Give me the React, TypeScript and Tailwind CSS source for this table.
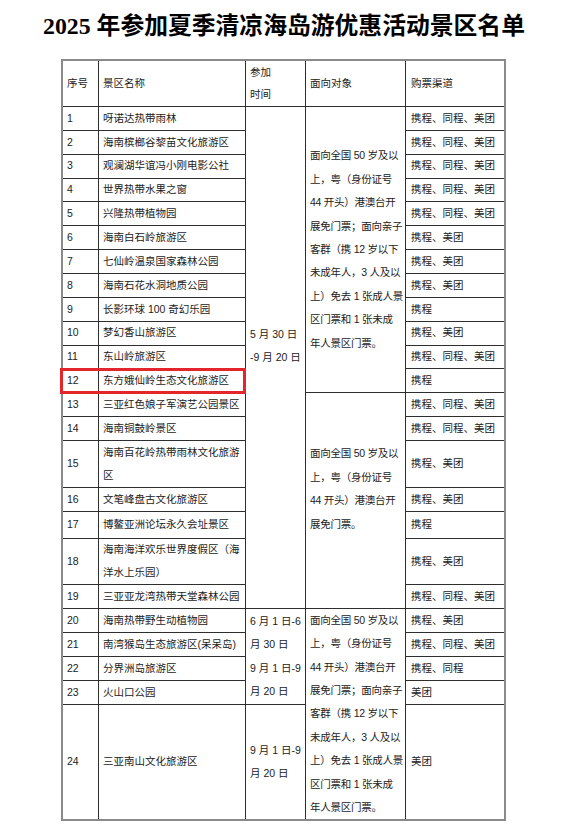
import React from "react";

type CellProps = { children?: React.ReactNode; className?: string };

function Cell({ children, className = "" }: CellProps) {
  return (
    <div
      className={
        "bg-white flex items-center pl-[4px] text-[10.5px] leading-[23.4px] text-[#222] whitespace-nowrap " +
        className
      }
    >
      <div>{children}</div>
    </div>
  );
}

function Lines({ lines }: { lines: string[] }) {
  return (
    <>
      {lines.map((l, i) => (
        <div key={i} className="h-[23.4px]">
          {l}
        </div>
      ))}
    </>
  );
}

const rows: { n: string; name: string[]; ch: string }[] = [
  { n: "1", name: ["呀诺达热带雨林"], ch: "携程、同程、美团" },
  { n: "2", name: ["海南槟榔谷黎苗文化旅游区"], ch: "携程、同程、美团" },
  { n: "3", name: ["观澜湖华谊冯小刚电影公社"], ch: "携程、同程、美团" },
  { n: "4", name: ["世界热带水果之窗"], ch: "携程、同程、美团" },
  { n: "5", name: ["兴隆热带植物园"], ch: "携程、同程、美团" },
  { n: "6", name: ["海南白石岭旅游区"], ch: "携程、美团" },
  { n: "7", name: ["七仙岭温泉国家森林公园"], ch: "携程、美团" },
  { n: "8", name: ["海南石花水洞地质公园"], ch: "携程、美团" },
  { n: "9", name: ["长影环球 100 奇幻乐园"], ch: "携程" },
  { n: "10", name: ["梦幻香山旅游区"], ch: "携程、美团" },
  { n: "11", name: ["东山岭旅游区"], ch: "携程、同程、美团" },
  { n: "12", name: ["东方娥仙岭生态文化旅游区"], ch: "携程" },
  { n: "13", name: ["三亚红色娘子军演艺公园景区"], ch: "携程、同程、美团" },
  { n: "14", name: ["海南铜鼓岭景区"], ch: "携程、同程、美团" },
  { n: "15", name: ["海南百花岭热带雨林文化旅游", "区"], ch: "携程、美团" },
  { n: "16", name: ["文笔峰盘古文化旅游区"], ch: "携程、美团" },
  { n: "17", name: ["博鳌亚洲论坛永久会址景区"], ch: "携程" },
  { n: "18", name: ["海南海洋欢乐世界度假区（海", "洋水上乐园）"], ch: "携程、美团" },
  { n: "19", name: ["三亚亚龙湾热带天堂森林公园"], ch: "携程、同程、美团" },
  { n: "20", name: ["海南热带野生动植物园"], ch: "携程、美团" },
  { n: "21", name: ["南湾猴岛生态旅游区(呆呆岛)"], ch: "携程、同程、美团" },
  { n: "22", name: ["分界洲岛旅游区"], ch: "携程、同程" },
  { n: "23", name: ["火山口公园"], ch: "美团" },
  { n: "24", name: ["三亚南山文化旅游区"], ch: "美团" },
];

const fullText = [
  "面向全国 50 岁及以",
  "上，粤（身份证号",
  "44 开头）港澳台开",
  "展免门票；面向亲子",
  "客群（携 12 岁以下",
  "未成年人，3 人及以",
  "上）免去 1 张成人景",
  "区门票和 1 张未成",
  "年人景区门票。",
];

const shortText = [
  "面向全国 50 岁及以",
  "上，粤（身份证号",
  "44 开头）港澳台开",
  "展免门票。",
  "",
];

export default function App() {
  const cells: React.ReactNode[] = [];
  rows.forEach((r, i) => {
    const idx = i + 1;
    cells.push(
      <Cell key={"n" + idx}>{r.n}</Cell>,
      <Cell key={"a" + idx}>
        <Lines lines={r.name} />
      </Cell>
    );
    if (idx === 1) {
      cells.push(
        <Cell key="t1" className="row-span-19">
          <Lines lines={["5 月 30 日", "-9 月 20 日", ""]} />
        </Cell>,
        <Cell key="g1" className="row-span-12 tracking-[-0.25px]">
          <Lines lines={fullText} />
        </Cell>
      );
    }
    if (idx === 13) {
      cells.push(
        <Cell key="g2" className="row-span-7 tracking-[-0.25px]">
          <Lines lines={shortText} />
        </Cell>
      );
    }
    if (idx === 20) {
      cells.push(
        <Cell key="t2" className="row-span-4">
          <Lines lines={["6 月 1 日-6", "月 30 日", "9 月 1 日-9", "月 20 日"]} />
        </Cell>,
        <Cell key="g3" className="row-span-5 tracking-[-0.25px]">
          <Lines lines={fullText} />
        </Cell>
      );
    }
    if (idx === 24) {
      cells.push(
        <Cell key="t3">
          <Lines lines={["9 月 1 日-9", "月 20 日"]} />
        </Cell>
      );
    }
    cells.push(
      <Cell key={"c" + idx} className="pl-[5px]">
        {r.ch}
      </Cell>
    );
  });

  return (
    <div className="w-[572px] min-h-[832px] bg-white font-['Liberation_Sans','Noto_Sans_CJK_SC',sans-serif]">
      <div className="pt-[11px] pr-[4px] text-center text-[23.8px] leading-[30px] font-bold text-black font-['Liberation_Serif','Noto_Sans_CJK_SC',serif] whitespace-nowrap">
        2025 年参加夏季清凉海岛游优惠活动景区名单
      </div>
      <div className="relative mt-[18px] ml-[61px] w-[445px] border-2 border-[#8a8a8a]">
        <div className="grid gap-px bg-[#2e2e2e] grid-cols-[35px_146px_59px_99px_98px] grid-rows-[45px_repeat(14,22.86px)_46.3px_22.7px_25.6px_45.7px_repeat(5,23px)_113.5px]">
          <Cell>序号</Cell>
          <Cell>景区名称</Cell>
          <Cell>
            <div className="leading-[21.6px]">参加</div>
            <div className="leading-[21.6px]">时间</div>
          </Cell>
          <Cell>面向对象</Cell>
          <Cell className="pl-[5px]">购票渠道</Cell>
          {cells}
        </div>
        <div className="absolute left-[-3px] top-[307.3px] w-[186px] h-[26px] border-[3px] border-[#e3262b]" />
      </div>
    </div>
  );
}
